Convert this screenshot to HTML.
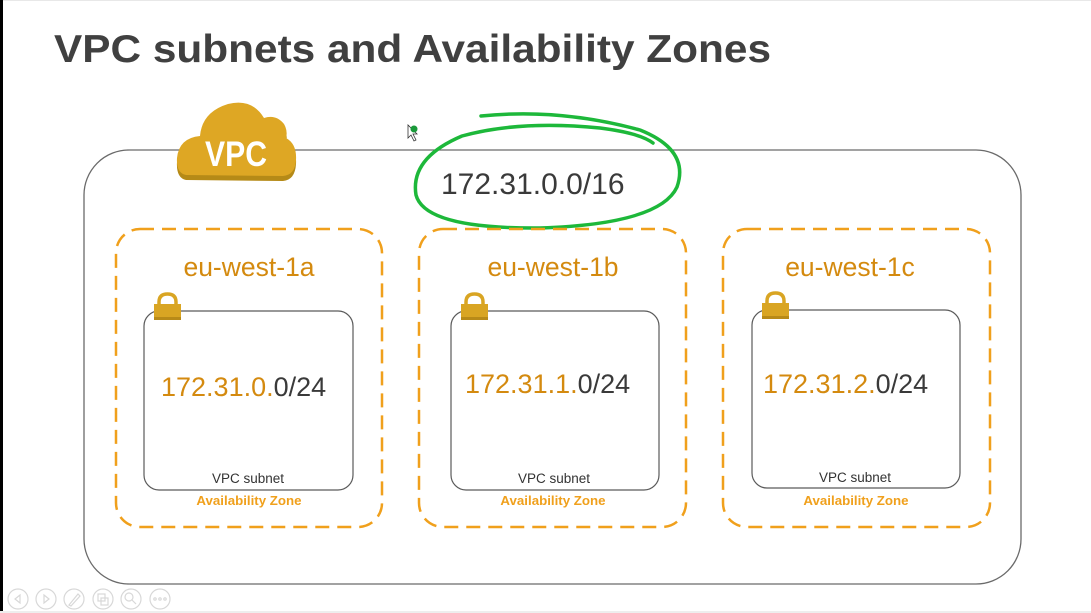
<!DOCTYPE html>
<html><head><meta charset="utf-8"><style>
html,body{margin:0;padding:0;background:#fff;}
svg{display:block;}
text{font-family:"Liberation Sans",Arial,sans-serif;}
</style></head><body>
<svg width="1091" height="613" viewBox="0 0 1091 613" xmlns="http://www.w3.org/2000/svg">
<rect width="1091" height="613" fill="#fff"/>
<rect x="0" y="0" width="1091" height="1" fill="#e8e8e8"/>
<rect x="0" y="0" width="3" height="613" fill="#000"/>
<text x="54" y="62" font-size="39" font-weight="bold" fill="#404040" textLength="717" lengthAdjust="spacingAndGlyphs">VPC subnets and Availability Zones</text>

<rect x="84" y="150" width="937" height="434" rx="45" fill="none" stroke="#6a6a6a" stroke-width="1.3"/>

<!-- VPC cloud -->
<g>
<path d="M186 180 Q176 178 177 162 Q179 142 200 140 Q202 116 228 108 Q252 102 264 122 Q276 118 284 128 Q288 135 286 142 Q297 148 296 164 Q295 180 283 181 Z" fill="#b58a17"/>
<path d="M186 175 Q176 173 177 158 Q179 138 200 136 Q202 112 228 104 Q252 98 264 118 Q276 114 284 124 Q288 131 286 138 Q297 144 296 160 Q295 175 283 176 Z" fill="#dea724"/>
<text x="236" y="166" font-size="35" font-weight="bold" fill="#fff" text-anchor="middle" textLength="62" lengthAdjust="spacingAndGlyphs">VPC</text>
</g>

<text x="441" y="194" font-size="30" fill="#3a3a3a">172.31.0.0/16</text>

<!-- green loop -->
<path d="M481 116 Q560 108 640 130 Q690 150 677 187 Q660 224 540 228 Q425 229 416 195 Q410 158 462 136 Q520 120 600 128 Q640 133 653 143" fill="none" stroke="#1db83a" stroke-width="3.5" stroke-linecap="round"/>
<!-- cursor -->
<path d="M408 125 L408 138 L411 135 L414 141 L416 140 L413 134 L417 134 Z" fill="#fff" stroke="#333" stroke-width="0.8"/>
<circle cx="414" cy="129" r="3.5" fill="#1a9a3a"/>

<!-- zones -->
<g fill="none" stroke="#f0a01c" stroke-width="2.5" stroke-dasharray="14,8">
<rect x="116" y="229" width="266" height="298" rx="24"/>
<rect x="419" y="229" width="267" height="298" rx="24"/>
<rect x="723" y="229" width="267" height="298" rx="24"/>
</g>
<g font-size="26.5" fill="#d48a0f" text-anchor="middle">
<text x="249" y="276">eu-west-1a</text>
<text x="553" y="276">eu-west-1b</text>
<text x="850" y="276">eu-west-1c</text>
</g>

<!-- subnets -->
<g fill="none" stroke="#5a5a5a" stroke-width="1.2">
<rect x="144" y="311" width="209" height="179" rx="15"/>
<rect x="451" y="311" width="208" height="179" rx="15"/>
<rect x="752" y="310" width="208" height="178" rx="15"/>
</g>

<!-- locks -->
<g id="lk">
<path d="M159 307 L159 302 Q159 294 167.5 294 Q176 294 176 302 L176 307" fill="none" stroke="#d9a523" stroke-width="3.5"/>
<rect x="154" y="304" width="27" height="16" fill="#d9a523"/>
<rect x="154" y="317" width="27" height="3" fill="#b88a18"/>
</g>
<use href="#lk" transform="translate(307,0)"/>
<use href="#lk" transform="translate(608,-1)"/>

<g font-size="27">
<text x="161" y="396"><tspan fill="#d48a0f">172.31.0.</tspan><tspan fill="#3a3a3a">0/24</tspan></text>
<text x="465" y="393"><tspan fill="#d48a0f">172.31.1.</tspan><tspan fill="#3a3a3a">0/24</tspan></text>
<text x="763" y="393"><tspan fill="#d48a0f">172.31.2.</tspan><tspan fill="#3a3a3a">0/24</tspan></text>
</g>
<g font-size="13.5" fill="#333" text-anchor="middle">
<text x="248" y="483">VPC subnet</text>
<text x="554" y="483">VPC subnet</text>
<text x="855" y="482">VPC subnet</text>
</g>
<g font-size="13.3" font-weight="bold" fill="#f0a01c" text-anchor="middle">
<text x="249" y="505">Availability Zone</text>
<text x="553" y="505">Availability Zone</text>
<text x="856" y="505">Availability Zone</text>
</g>

<!-- bottom toolbar -->
<g fill="none" stroke="#d8d8d8" stroke-width="1.2">
<circle cx="18" cy="599" r="10"/>
<circle cx="46" cy="599" r="10"/>
<circle cx="74" cy="599" r="10"/>
<circle cx="103" cy="599" r="10"/>
<circle cx="131" cy="599" r="10"/>
<circle cx="160" cy="599" r="10"/>
<path d="M20 595 L15 599 L20 603 Z"/>
<path d="M44 595 L49 599 L44 603 Z"/>
<path d="M69 605 L78 594 L80 596 L71 606 Z"/>
<rect x="98" y="594" width="7" height="7"/><rect x="101" y="598" width="7" height="7"/>
<circle cx="129" cy="597" r="4"/><path d="M132 600 L136 604"/>
<circle cx="155" cy="599" r="1.2"/><circle cx="160" cy="599" r="1.2"/><circle cx="165" cy="599" r="1.2"/>
</g>
<rect x="0" y="611" width="1091" height="2" fill="#eee"/>
</svg>
</body></html>
